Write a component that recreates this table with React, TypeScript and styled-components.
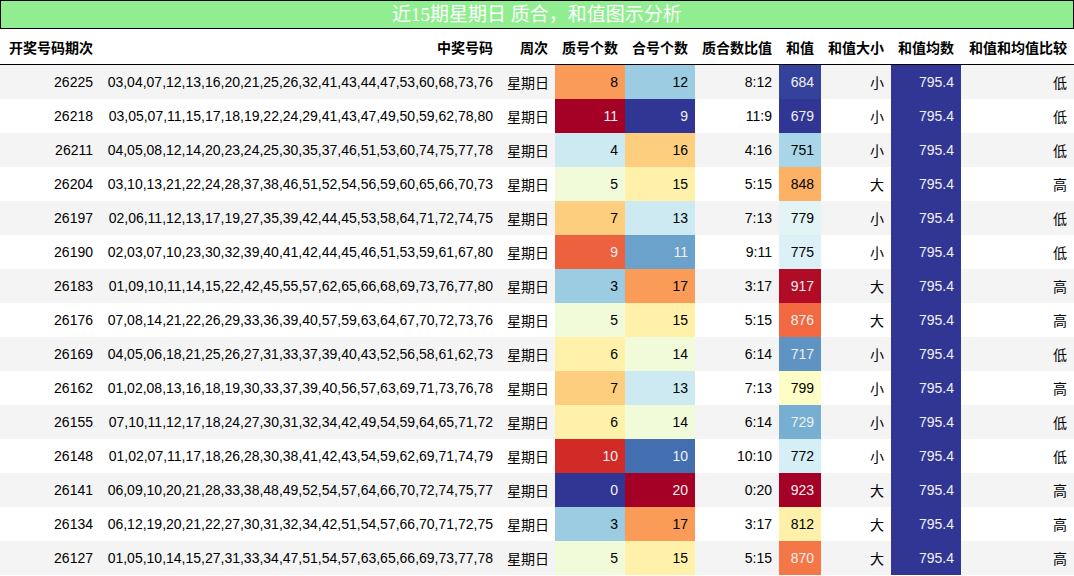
import React from 'react'
import styled, { createGlobalStyle } from 'styled-components'

const GlobalStyle = createGlobalStyle`
  body {
    margin: 0;
    background: #fff;
    font-family: "Liberation Sans", "Noto Sans CJK SC", sans-serif;
  }
`

type Draw = {
  period: string
  nums: string
  prime: number
  comp: number
  sum: number
  size: string
  cmp: string
}

const rows: Draw[] = [
  { period: '26225', nums: '03,04,07,12,13,16,20,21,25,26,32,41,43,44,47,53,60,68,73,76', prime: 8, comp: 12, sum: 684, size: '小', cmp: '低' },
  { period: '26218', nums: '03,05,07,11,15,17,18,19,22,24,29,41,43,47,49,50,59,62,78,80', prime: 11, comp: 9, sum: 679, size: '小', cmp: '低' },
  { period: '26211', nums: '04,05,08,12,14,20,23,24,25,30,35,37,46,51,53,60,74,75,77,78', prime: 4, comp: 16, sum: 751, size: '小', cmp: '低' },
  { period: '26204', nums: '03,10,13,21,22,24,28,37,38,46,51,52,54,56,59,60,65,66,70,73', prime: 5, comp: 15, sum: 848, size: '大', cmp: '高' },
  { period: '26197', nums: '02,06,11,12,13,17,19,27,35,39,42,44,45,53,58,64,71,72,74,75', prime: 7, comp: 13, sum: 779, size: '小', cmp: '低' },
  { period: '26190', nums: '02,03,07,10,23,30,32,39,40,41,42,44,45,46,51,53,59,61,67,80', prime: 9, comp: 11, sum: 775, size: '小', cmp: '低' },
  { period: '26183', nums: '01,09,10,11,14,15,22,42,45,55,57,62,65,66,68,69,73,76,77,80', prime: 3, comp: 17, sum: 917, size: '大', cmp: '高' },
  { period: '26176', nums: '07,08,14,21,22,26,29,33,36,39,40,57,59,63,64,67,70,72,73,76', prime: 5, comp: 15, sum: 876, size: '大', cmp: '高' },
  { period: '26169', nums: '04,05,06,18,21,25,26,27,31,33,37,39,40,43,52,56,58,61,62,73', prime: 6, comp: 14, sum: 717, size: '小', cmp: '低' },
  { period: '26162', nums: '01,02,08,13,16,18,19,30,33,37,39,40,56,57,63,69,71,73,76,78', prime: 7, comp: 13, sum: 799, size: '小', cmp: '高' },
  { period: '26155', nums: '07,10,11,12,17,18,24,27,30,31,32,34,42,49,54,59,64,65,71,72', prime: 6, comp: 14, sum: 729, size: '小', cmp: '低' },
  { period: '26148', nums: '01,02,07,11,17,18,26,28,30,38,41,42,43,54,59,62,69,71,74,79', prime: 10, comp: 10, sum: 772, size: '小', cmp: '低' },
  { period: '26141', nums: '06,09,10,20,21,28,33,38,48,49,52,54,57,64,66,70,72,74,75,77', prime: 0, comp: 20, sum: 923, size: '大', cmp: '高' },
  { period: '26134', nums: '06,12,19,20,21,22,27,30,31,32,34,42,51,54,57,66,70,71,72,75', prime: 3, comp: 17, sum: 812, size: '大', cmp: '高' },
  { period: '26127', nums: '01,05,10,14,15,27,31,33,34,47,51,54,57,63,65,66,69,73,77,78', prime: 5, comp: 15, sum: 870, size: '大', cmp: '高' },
]

const AVG = '795.4'

// RdYlBu control points, used reversed
const stops = [
  [165, 0, 38], [215, 48, 39], [244, 109, 67], [253, 174, 97], [254, 224, 144],
  [255, 255, 191], [224, 243, 248], [171, 217, 233], [116, 173, 209], [69, 117, 180], [49, 54, 149],
]

function gradient(v: number, min: number, max: number) {
  const t = max === min ? 0 : (v - min) / (max - min)
  const idx = Math.min(255, Math.floor(t * 256))
  const x = (1 - idx / 255) * 10
  const i = Math.min(9, Math.floor(x))
  const f = x - i
  const rgb = stops[i].map((c, k) => Math.round(c + (stops[i + 1][k] - c) * f))
  const lin = rgb.map((c) => {
    const s = c / 255
    return s <= 0.03928 ? s / 12.92 : Math.pow((s + 0.055) / 1.055, 2.4)
  })
  const lum = 0.2126 * lin[0] + 0.7152 * lin[1] + 0.0722 * lin[2]
  return {
    background: `rgb(${rgb.join(',')})`,
    color: lum < 0.408 ? '#f1f1f1' : '#000',
  }
}

const range = (key: 'prime' | 'comp' | 'sum') => {
  const vals = rows.map((r) => r[key])
  return [Math.min(...vals), Math.max(...vals)] as const
}

const widths = [100, 400, 55, 70, 70, 84, 42, 70, 70, 113]
const heads = ['开奖号码期次', '中奖号码', '周次', '质号个数', '合号个数', '质合数比值', '和值', '和值大小', '和值均数', '和值和均值比较']

const Page = styled.div`
  width: 1074px;
`

const Title = styled.div`
  height: 27px;
  border: 1px solid #000;
  background: #90ee90;
  color: #fff;
  text-align: center;
  font-family: "Liberation Serif", "Noto Sans CJK SC", serif;
  font-size: 19px;
  line-height: 27px;
`

const Table = styled.table`
  width: 1074px;
  table-layout: fixed;
  border-collapse: collapse;
  border-spacing: 0;
  font-size: 14px;
  color: #000;
`

const Head = styled.th`
  height: 35px;
  padding: 0 7px;
  text-align: right;
  font-weight: bold;
  white-space: nowrap;
  border-bottom: 1px solid #000;
`

const Row = styled.tr`
  &:nth-child(odd) {
    background: #f4f4f4;
  }
`

const Cell = styled.td`
  height: 34px;
  padding: 0 7px;
  text-align: right;
  white-space: nowrap;
`

export default function App() {
  const [pMin, pMax] = range('prime')
  const [cMin, cMax] = range('comp')
  const [sMin, sMax] = range('sum')
  const avg = gradient(0, 0, 0)
  return (
    <Page>
      <GlobalStyle />
      <Title>近15期星期日 质合，和值图示分析</Title>
      <Table>
        <colgroup>
          {widths.map((w, i) => (
            <col key={i} style={{ width: w }} />
          ))}
        </colgroup>
        <thead>
          <tr>
            {heads.map((h) => (
              <Head key={h}>{h}</Head>
            ))}
          </tr>
        </thead>
        <tbody>
          {rows.map((r) => (
            <Row key={r.period}>
              <Cell>{r.period}</Cell>
              <Cell>{r.nums}</Cell>
              <Cell>星期日</Cell>
              <Cell style={gradient(r.prime, pMin, pMax)}>{r.prime}</Cell>
              <Cell style={gradient(r.comp, cMin, cMax)}>{r.comp}</Cell>
              <Cell>{`${r.prime}:${r.comp}`}</Cell>
              <Cell style={gradient(r.sum, sMin, sMax)}>{r.sum}</Cell>
              <Cell>{r.size}</Cell>
              <Cell style={avg}>{AVG}</Cell>
              <Cell>{r.cmp}</Cell>
            </Row>
          ))}
        </tbody>
      </Table>
    </Page>
  )
}
